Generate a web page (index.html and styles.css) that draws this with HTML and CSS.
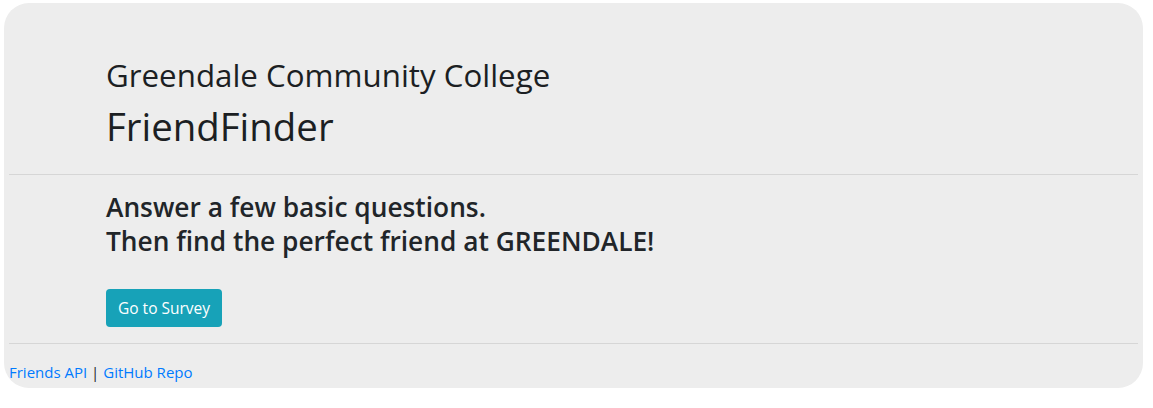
FILE: index.html
```html
<!DOCTYPE html>
<html lang="en">
<head>
<meta charset="utf-8">
<title>FriendFinder</title>
<link rel="stylesheet" href="styles.css">
</head>
<body>
<div class="page">
  <div class="jumbo">
    <div class="intro">
      <h2 class="college">Greendale Community College</h2>
      <h1 class="title">FriendFinder</h1>
    </div>
    <hr class="rule">
    <div class="pitch">
      <h3 class="lead">Answer a few basic questions.<br>Then find the perfect friend at GREENDALE!</h3>
      <a class="btn" href="#">Go to Survey</a>
    </div>
    <hr class="rule">
    <div class="footer">
      <a href="#">Friends API</a> | <a href="#">GitHub Repo</a>
    </div>
  </div>
</div>
</body>
</html>
```
FILE: styles.css
```css
html, body {
  margin: 0;
  padding: 0;
  background: #ffffff;
}
body {
  font-family: "Open Sans", "Noto Sans", sans-serif;
  color: #212529;
  font-size: 16px;
  line-height: 1.5;
}
.page {
  padding: 3px 10px 20px 4px;
}
.jumbo {
  background: #ededed;
  border-radius: 25px;
  padding: 0 5px;
  height: 385px;
  box-sizing: border-box;
}
.intro {
  padding: 54px 0 0 97px;
  height: 171px;
  box-sizing: border-box;
}
.college {
  margin: 0 0 8px;
  font-size: 31.3px;
  font-weight: 500;
  line-height: 1.2;
  color: #1c1f23;
}
.title {
  margin: 0;
  font-size: 38.4px;
  font-weight: 500;
  line-height: 1.2;
  color: #1c1f23;
}
.rule {
  margin: 0;
  border: 0;
  border-top: 1px solid #d6d6d6;
  height: 0;
}
.pitch {
  padding: 15px 0 15px 97px;
  height: 168px;
  box-sizing: border-box;
}
.lead {
  margin: 0 0 31px;
  font-size: 26.3px;
  font-weight: 600;
  line-height: 34px;
}
.btn {
  display: inline-block;
  background: #17a2b8;
  color: #fff;
  text-decoration: none;
  font-size: 15.5px;
  line-height: 24px;
  padding: 7px 12px;
  border-radius: 4px;
}
.footer {
  padding-top: 17px;
  font-size: 15px;
  color: #212529;
}
.footer a {
  color: #007bff;
  text-decoration: none;
}
```
